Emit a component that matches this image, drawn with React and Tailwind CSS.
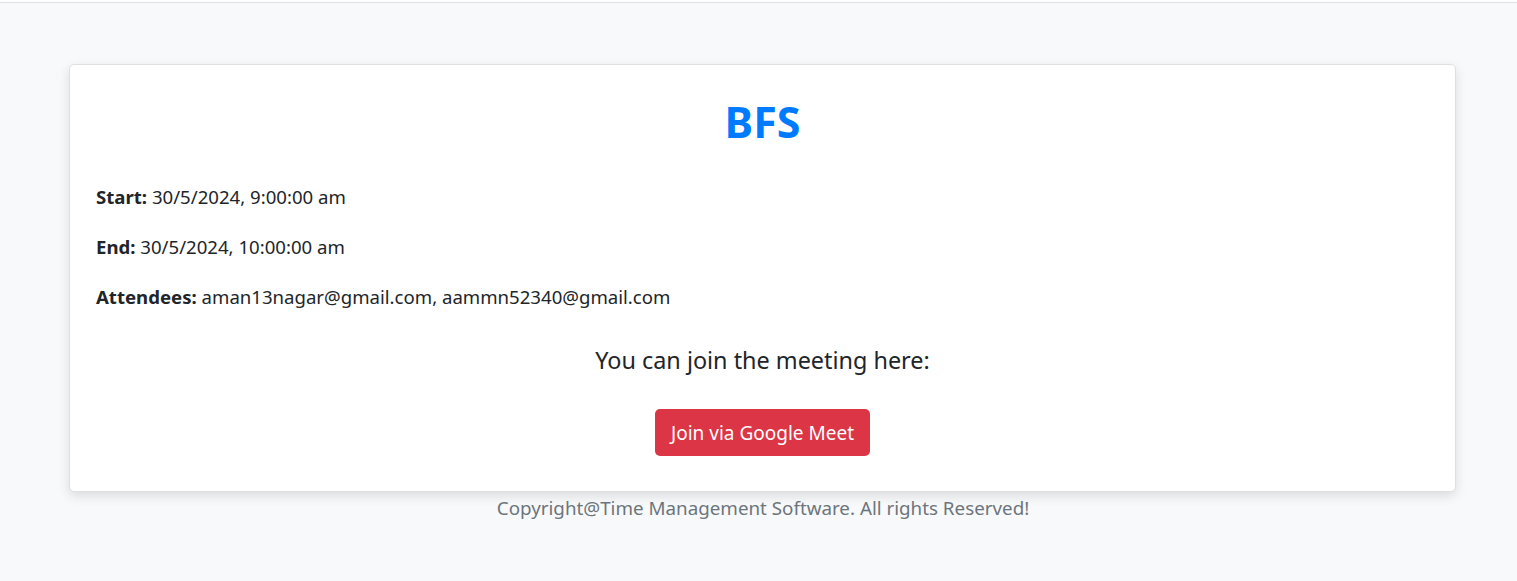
import React from 'react';

const meeting = {
    title: 'BFS',
    start: '30/5/2024, 9:00:00 am',
    end: '30/5/2024, 10:00:00 am',
    attendees: ['aman13nagar@gmail.com', 'aammn52340@gmail.com'],
};

const Detail = ({ label, value }) => (
    <p className="mb-[23px] text-[18.6px] leading-[27px] text-[#212529]">
        <strong className="font-bold">{label}:</strong> {value}
    </p>
);

const App = () => {
    return (
        <div
            className="min-h-screen w-full bg-[#f8f9fa]"
            style={{ fontFamily: '"Noto Sans", "Open Sans", sans-serif' }}
        >
            <div className="h-[3px] border-b border-[#dee2e6] bg-white" />

            <div className="ml-[69px] mr-[61px] mt-[61px] rounded-[5px] border border-[#dfdfdf] bg-white px-[26px] pb-[35px] pt-[33px] shadow-[0_4px_12px_rgba(0,0,0,0.12)]">
                <h1 className="mb-[37px] text-center text-[43px] font-bold leading-[48px] text-[#007bff]">
                    {meeting.title}
                </h1>

                <Detail label="Start" value={meeting.start} />
                <Detail label="End" value={meeting.end} />
                <Detail label="Attendees" value={meeting.attendees.join(', ')} />

                <div className="mt-[36px] flex flex-col items-center">
                    <h4 className="text-[23.4px] leading-[29px] text-[#212529]">
                        You can join the meeting here:
                    </h4>
                    <a
                        href="#"
                        className="mt-[34px] rounded-[5px] bg-[#dc3545] px-4 py-[8.5px] text-[19px] leading-[30px] text-white"
                    >
                        Join via Google Meet
                    </a>
                </div>
            </div>

            <p className="ml-[9px] mt-[3px] text-center text-[18.8px] leading-[27px] text-[#6c757d]">
                Copyright@Time Management Software. All rights Reserved!
            </p>
        </div>
    );
};

export default App;
